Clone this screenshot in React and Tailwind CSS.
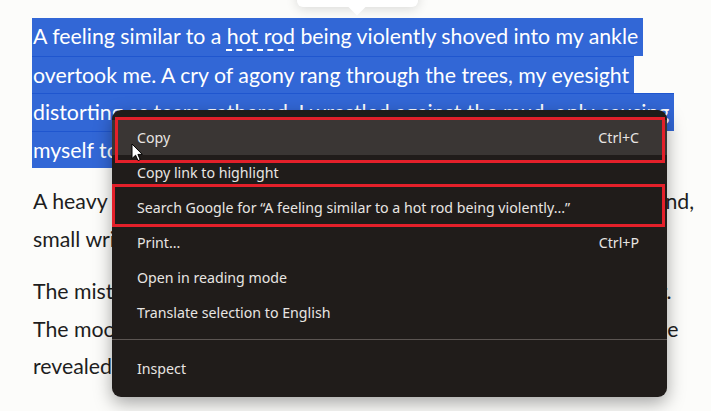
import React from 'react'

const sel = [
  { t: 'A feeling similar to a ', hot: true, rest: ' being violently shoved into my ankle' },
  { t: 'overtook me. A cry of agony rang through the trees, my eyesight' },
  { t: 'distorting as tears gathered. I wrestled against the mud, only causing' },
  { t: 'myself to sink deeper into the cold earth below me.' },
]

const paragraphs = [
  {
    gap: 'mb-[15px]',
    lines: [
      'A heavy weight settled over my chest as I struggled to find firm ground,',
      'small wrists trembling beneath my weight.',
    ],
  },
  {
    gap: 'mb-[15.5px]',
    lines: [
      'The mist clung around my legs as the footsteps got closer and closer.',
      'The moon slid out from behind the trees, and the tall figure above me',
      'revealed itself at last.',
    ],
  },
  {
    gap: '',
    lines: ["I couldn't look away, frozen in place while it watched me with hollow eyes."],
  },
]

const menuItems = [
  { label: 'Copy', key: 'Ctrl+C', active: true },
  { label: 'Copy link to highlight' },
  { label: 'Search Google for \u201cA feeling similar to a hot rod being violently...\u201d' },
  { label: 'Print...', key: 'Ctrl+P' },
  { label: 'Open in reading mode' },
  { label: 'Translate selection to English' },
]

function Cursor() {
  return (
    <svg width="12" height="19" viewBox="0 0 12 19" className="absolute left-[131px] top-[143px]">
      <path d="M1 1 L1 15.5 L4.6 12.2 L7 17.6 L9.2 16.6 L6.9 11.4 L11.3 11.4 Z" fill="#fff" stroke="#000" strokeWidth="1" strokeLinejoin="round" />
    </svg>
  )
}

function ContextMenu() {
  return (
    <div className="absolute left-[112px] top-[110px] w-[555px] h-[287px] rounded-[9px] bg-[#201c1a] pt-[10px] shadow-[0_6px_18px_rgba(0,0,0,0.35)] font-['Noto_Sans',sans-serif] text-[14.2px] text-[#e8e5e2]">
      {menuItems.map(({ label, key, active }) => (
        <div
          key={label}
          className={`h-[35px] flex items-center justify-between pl-[25px] pr-[28px] ${active ? 'bg-[#3a3634]' : ''}`}
        >
          <span className="whitespace-nowrap">{label}</span>
          {key && <span>{key}</span>}
        </div>
      ))}
      <div className="h-px bg-[#5b5552] mt-[9px] mb-[11px]" />
      <div className="h-[35px] flex items-center pl-[25px]">Inspect</div>
    </div>
  )
}

export default function App() {
  return (
    <div className="relative w-[711px] h-[411px] overflow-hidden bg-[#fcfcfa]">
      {/* highlight popup peeking from top */}
      <div className="absolute left-[297px] top-[-30px] w-[121px] h-[37px] rounded-md bg-white shadow-[0_2px_12px_rgba(0,0,0,0.14)]" />
      <div className="absolute left-[351px] top-[1px] w-[12px] h-[12px] rotate-45 bg-white" />

      <article className="pl-[32px] pt-[18px] font-['Lato',sans-serif] text-[21.3px] leading-[37.5px] text-[#1e1e1e]">
        <div className="mb-[15px]">
          {sel.map((l, i) => (
            <div
              key={i}
              className={`w-fit pl-[1px] pr-[5px] bg-[#3267d6] text-white whitespace-nowrap ${i > 0 ? 'border-t border-[#1f56cf] leading-[36.5px]' : ''}`}
            >
              {l.hot ? (
                <>
                  {l.t}
                  <span className="underline decoration-dashed decoration-white decoration-2 underline-offset-[5px]">hot rod</span>
                  {l.rest}
                </>
              ) : (
                l.t
              )}
            </div>
          ))}
        </div>

        {paragraphs.map((p, i) => (
          <p key={i} className={`pl-[1px] ${p.gap}`}>
            {p.lines.map((line) => (
              <span key={line} className="block whitespace-nowrap">{line}</span>
            ))}
          </p>
        ))}
      </article>

      <ContextMenu />

      {/* annotation boxes */}
      <div className="absolute left-[115px] top-[117px] w-[550px] h-[46px] border-[3px] border-[#e3202a]" />
      <div className="absolute left-[112px] top-[184px] w-[553px] h-[43px] border-[3px] border-[#e3202a]" />

      <Cursor />
    </div>
  )
}
